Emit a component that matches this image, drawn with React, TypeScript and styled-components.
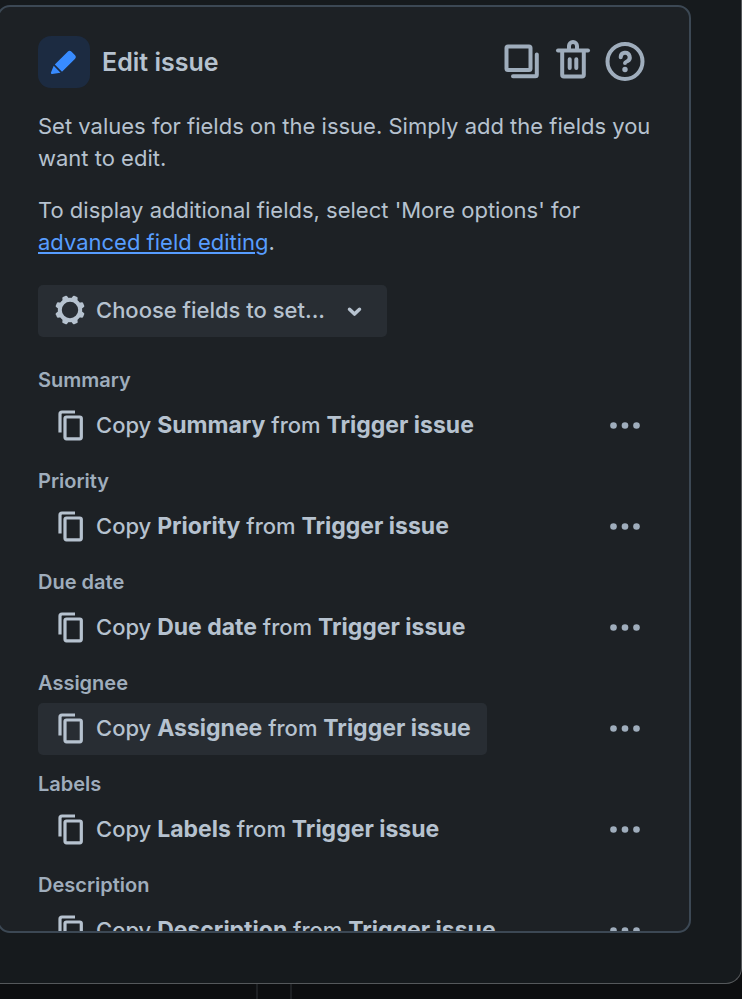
import React from "react";
import styled, { createGlobalStyle } from "styled-components";

const GlobalStyle = createGlobalStyle`
  *, *::before, *::after { box-sizing: border-box; }
  body {
    margin: 0;
    background: #0d0e10;
    color: #b6c2cf;
    font-family: Inter, "Liberation Sans", sans-serif;
    font-size: 22px;
    line-height: 32px;
  }
  button { font: inherit; color: inherit; border: 0; cursor: pointer; }
`;

const Screen = styled.div`
  height: 100vh;
  display: flex;
  flex-direction: column;
  overflow: hidden;
`;

const Dialog = styled.main`
  flex: 1;
  min-height: 0;
  display: flex;
  padding: 5px 50px 50px 0;
  background: #161a1d;
  border: solid #55585b;
  border-width: 0 1px 1px 0;
  border-bottom-right-radius: 16px;
`;

const Backdrop = styled.div`
  height: 15px;
  flex: none;
  display: grid;
  grid-template-columns: 258px 34px 1fr;
`;

const BackdropColumn = styled.div`
  border-right: 2px solid #1f2124;
  &:last-child { border-right: 0; }
`;

const Panel = styled.section`
  flex: 1;
  min-width: 0;
  margin-left: -3px;
  overflow: hidden;
  padding: 29px 38px 0 39px;
  background: #1d2125;
  border: 2px solid #3c4854;
  border-radius: 13px;
`;

const Header = styled.header`
  display: flex;
  align-items: center;
  margin-bottom: 22px;
`;

const Tile = styled.span`
  width: 52px;
  height: 52px;
  margin-right: 12px;
  display: grid;
  place-items: center;
  border-radius: 13px;
  background: #1c2b41;
  color: #388bff;
`;

const Title = styled.h1`
  flex: 1;
  margin: 0;
  font-size: 25px;
  line-height: 32px;
  font-weight: 600;
`;

const IconButton = styled.button`
  width: 52px;
  height: 52px;
  flex: none;
  padding: 0;
  display: grid;
  place-items: center;
  background: transparent;
  && { color: #9fadbc; }
`;

const Text = styled.p`
  margin: 0 0 20px;
`;

const Link = styled.a`
  color: #579dff;
  text-decoration: underline;
`;

const FieldButton = styled.button<{ $filled?: boolean }>`
  height: 52px;
  padding: 0 16px 2px 16px;
  display: inline-flex;
  align-items: center;
  gap: 10px;
  border-radius: 5px;
  white-space: nowrap;
  font-weight: 500;
  background: ${(p) => (p.$filled ? "#282d33" : "transparent")};
`;

const Chooser = styled(FieldButton)`
  margin: 7px 0 32px;
  padding-right: 14px;
`;

const Field = styled.div`
  margin-bottom: 18px;
`;

const FieldLabel = styled.h2`
  margin: 0 0 8px;
  color: #9fadbc;
  font-size: 20px;
  line-height: 23px;
  font-weight: 600;
`;

const FieldRow = styled.div`
  display: flex;
  align-items: center;
  justify-content: space-between;
`;

const Strong = styled.strong`
  font-size: 23px;
  font-weight: 700;
`;

const PencilIcon = () => (
  <svg width="32" height="32" viewBox="0 0 32 32" fill="currentColor" aria-hidden="true">
    <path d="M6.800 18.600 19.900 5.500a2.400 2.400 0 0 1 3.400 0l3.800 3.800a2.400 2.400 0 0 1 0 3.400L14 25.800z" />
    <path d="M5.700 19.800 12.500 26.700 4.200 28a1.200 1.200 0 0 1-1.300-1.300z" />
  </svg>
);

const DuplicateIcon = () => (
  <svg width="40" height="40" viewBox="0 0 40 40" fill="none" stroke="currentColor" strokeWidth="4" strokeLinecap="round" strokeLinejoin="round" aria-hidden="true">
    <rect x="5.500" y="4.500" width="24" height="23.500" rx="1.500" />
    <path d="M35.800 12.500v20.300a1.500 1.500 0 0 1-1.500 1.500H12" />
  </svg>
);

const TrashIcon = () => (
  <svg width="40" height="40" viewBox="0 0 40 40" fill="none" stroke="currentColor" strokeWidth="4" strokeLinecap="round" overflow="visible" aria-hidden="true">
    <path d="M5 8.500h30" />
    <path d="M16 8V4a4 4 0 0 1 8 0V8" />
    <path d="M9.200 10v22.700a1.800 1.800 0 0 0 1.800 1.800h18a1.800 1.800 0 0 0 1.800-1.800V10" />
    <path d="M16.700 17.200v8.800M23.300 17.200v8.800" />
  </svg>
);

const HelpIcon = () => (
  <svg width="40" height="40" viewBox="0 0 40 40" fill="none" stroke="currentColor" strokeWidth="4" strokeLinecap="round" strokeLinejoin="round" aria-hidden="true">
    <circle cx="20" cy="19.500" r="17.500" />
    <path d="M15.700 15.200a4.500 4.500 0 1 1 6.500 4q-2.200 1-2.200 1.800" />
    <circle cx="20" cy="27.500" r="2.700" fill="currentColor" stroke="none" />
  </svg>
);

const GearIcon = () => (
  <svg width="32" height="32" viewBox="0 0 32 32" fill="none" stroke="currentColor" aria-hidden="true">
    <circle cx="16" cy="16" r="10.200" strokeWidth="4" />
    {[22.5, 67.5, 112.5, 157.5, 202.5, 247.5, 292.5, 337.5].map((angle) => (
      <path key={angle} d="M12.600 5 13.500 2Q13.800 1.200 14.500 1.200H17.500Q18.200 1.200 18.500 2L19.400 5z" fill="currentColor" stroke="none" transform={`rotate(${angle} 16 16)`} />
    ))}
  </svg>
);

const ChevronIcon = () => (
  <svg width="38" height="32" viewBox="0 0 38 32" fill="none" stroke="currentColor" strokeWidth="3.500" strokeLinecap="round" strokeLinejoin="round" aria-hidden="true">
    <path d="m14.500 15.300 5 4.800 5-4.800" />
  </svg>
);

const CopyIcon = () => (
  <svg width="32" height="32" viewBox="0 0 32 32" fill="none" stroke="currentColor" strokeWidth="3.200" aria-hidden="true">
    <path d="M6 23.500V5a2 2 0 0 1 2-2H21" />
    <rect x="11" y="8" width="16.300" height="21.800" rx="1.500" />
  </svg>
);

const MoreIcon = () => (
  <svg width="40" height="40" viewBox="0 0 40 40" fill="currentColor" aria-hidden="true">
    <circle cx="8.500" cy="19.500" r="3.300" />
    <circle cx="20" cy="19.500" r="3.300" />
    <circle cx="31.500" cy="19.500" r="3.300" />
  </svg>
);

const fields = [
  { name: "Summary" },
  { name: "Priority" },
  { name: "Due date" },
  { name: "Assignee", active: true },
  { name: "Labels" },
  { name: "Description" },
];

export default function App() {
  return (
    <Screen>
      <GlobalStyle />
      <Dialog>
        <Panel>
          <Header>
            <Tile><PencilIcon /></Tile>
            <Title>Edit issue</Title>
            <IconButton aria-label="Duplicate"><DuplicateIcon /></IconButton>
            <IconButton aria-label="Delete"><TrashIcon /></IconButton>
            <IconButton aria-label="Help"><HelpIcon /></IconButton>
          </Header>
          <Text>Set values for fields on the issue. Simply add the fields you want to edit.</Text>
          <Text>
            To display additional fields, select 'More options' for{" "}
            <Link href="#advanced">advanced field editing</Link>.
          </Text>
          <Chooser $filled>
            <GearIcon />
            Choose fields to set...
            <ChevronIcon />
          </Chooser>
          {fields.map((field) => (
            <Field key={field.name}>
              <FieldLabel>{field.name}</FieldLabel>
              <FieldRow>
                <FieldButton $filled={field.active}>
                  <CopyIcon />
                  <span>
                    Copy <Strong>{field.name}</Strong> from <Strong>Trigger issue</Strong>
                  </span>
                </FieldButton>
                <IconButton aria-label={`More actions for ${field.name}`}><MoreIcon /></IconButton>
              </FieldRow>
            </Field>
          ))}
        </Panel>
      </Dialog>
      <Backdrop>
        <BackdropColumn />
        <BackdropColumn />
        <BackdropColumn />
      </Backdrop>
    </Screen>
  );
}
